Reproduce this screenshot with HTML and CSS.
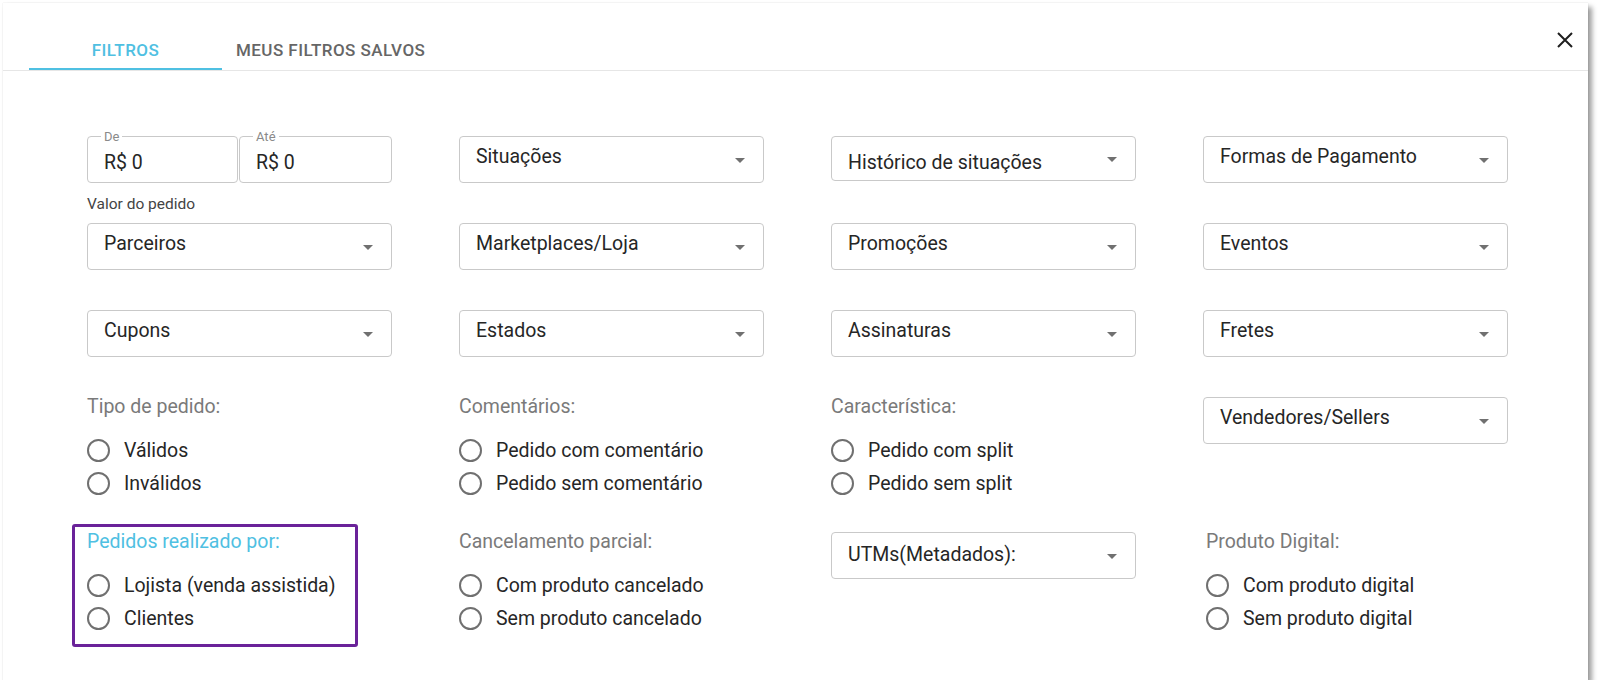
FILE: index.html
```html
<!DOCTYPE html>
<html lang="pt-BR">
<head>
  <meta charset="UTF-8" />
  <meta name="viewport" content="width=device-width, initial-scale=1.0"/>
  <title>Filtros de pedidos</title>
  <link rel="stylesheet" href="styles.css">
</head>
<body>
  <div class="dialog">
    <header class="dialog-header">
      <nav class="tabs">
        <button class="tab active">Filtros</button>
        <button class="tab">Meus filtros salvos</button>
      </nav>
      <button class="close" aria-label="Fechar">
        <svg width="16" height="16" viewBox="0 0 16 16">
          <path d="M1 1 L15 15 M15 1 L1 15" stroke="#1f1f1f" stroke-width="2" fill="none"/>
        </svg>
      </button>
    </header>

    <div class="filters">
      <!-- row 1 -->
      <div class="price-range">
        <div class="price-fields">
          <div class="outlined">
            <span class="outlined-label">De</span>
            <span class="outlined-value">R$ 0</span>
          </div>
          <div class="outlined">
            <span class="outlined-label">Até</span>
            <span class="outlined-value">R$ 0</span>
          </div>
        </div>
        <div class="helper">Valor do pedido</div>
      </div>
      <div class="select"><span class="select-text">Situações</span><span class="caret"></span></div>
      <div class="select select-low"><span class="select-text">Histórico de situações</span><span class="caret"></span></div>
      <div class="select"><span class="select-text">Formas de Pagamento</span><span class="caret"></span></div>

      <!-- row 2 -->
      <div class="select"><span class="select-text">Parceiros</span><span class="caret"></span></div>
      <div class="select"><span class="select-text">Marketplaces/Loja</span><span class="caret"></span></div>
      <div class="select"><span class="select-text">Promoções</span><span class="caret"></span></div>
      <div class="select"><span class="select-text">Eventos</span><span class="caret"></span></div>

      <!-- row 3 -->
      <div class="select"><span class="select-text">Cupons</span><span class="caret"></span></div>
      <div class="select"><span class="select-text">Estados</span><span class="caret"></span></div>
      <div class="select"><span class="select-text">Assinaturas</span><span class="caret"></span></div>
      <div class="select"><span class="select-text">Fretes</span><span class="caret"></span></div>

      <!-- row 4 -->
      <div class="radio-group">
        <div class="group-label">Tipo de pedido:</div>
        <label class="radio"><span class="circle"></span>Válidos</label>
        <label class="radio"><span class="circle"></span>Inválidos</label>
      </div>
      <div class="radio-group">
        <div class="group-label">Comentários:</div>
        <label class="radio"><span class="circle"></span>Pedido com comentário</label>
        <label class="radio"><span class="circle"></span>Pedido sem comentário</label>
      </div>
      <div class="radio-group">
        <div class="group-label">Característica:</div>
        <label class="radio"><span class="circle"></span>Pedido com split</label>
        <label class="radio"><span class="circle"></span>Pedido sem split</label>
      </div>
      <div class="cell-top">
        <div class="select"><span class="select-text">Vendedores/Sellers</span><span class="caret"></span></div>
      </div>

      <!-- row 5 -->
      <div class="radio-group highlighted">
        <div class="group-label accent">Pedidos realizado por:</div>
        <label class="radio"><span class="circle"></span>Lojista (venda assistida)</label>
        <label class="radio"><span class="circle"></span>Clientes</label>
      </div>
      <div class="radio-group">
        <div class="group-label">Cancelamento parcial:</div>
        <label class="radio"><span class="circle"></span>Com produto cancelado</label>
        <label class="radio"><span class="circle"></span>Sem produto cancelado</label>
      </div>
      <div class="cell-top">
        <div class="select"><span class="select-text select-mid">UTMs(Metadados):</span><span class="caret"></span></div>
      </div>
      <div class="radio-group shifted">
        <div class="group-label">Produto Digital:</div>
        <label class="radio"><span class="circle"></span>Com produto digital</label>
        <label class="radio"><span class="circle"></span>Sem produto digital</label>
      </div>
    </div>
  </div>
</body>
</html>
```

FILE: styles.css
```css
:root {
  --accent: #4fc0e2;
  --text: #262626;
  --muted: #7a7a7a;
  --border: #c9c9c9;
}

*, *::before, *::after {
  box-sizing: border-box;
}

body {
  margin: 0;
  background: #fff;
  font-family: Roboto, "Liberation Sans", Arial, sans-serif;
  color: var(--text);
}

.dialog {
  margin: 3px 0 0 3px;
  width: 1585px;
  height: 677px;
  background: #fff;
  box-shadow: 0 0 1px rgba(0, 0, 0, 0.18), 4px 4px 5px rgba(0, 0, 0, 0.38);
}

.dialog-header {
  display: flex;
  justify-content: space-between;
  align-items: flex-start;
  height: 68px;
  border-bottom: 1px solid #e6e6e6;
  padding: 0 15px 0 26px;
}

.tabs {
  display: flex;
}

.tab {
  min-width: 193px;
  height: 67px;
  padding: 29px 14px 0;
  border: none;
  border-bottom: 2px solid transparent;
  background: none;
  font-family: inherit;
  font-size: 17px;
  font-weight: 500;
  line-height: 20px;
  letter-spacing: 0.45px;
  text-transform: uppercase;
  color: #666;
  text-align: center;
  vertical-align: top;
  cursor: pointer;
}

.tab.active {
  color: var(--accent);
  border-bottom-color: var(--accent);
}

.close {
  margin-top: 29px;
  padding: 0;
  border: none;
  background: none;
  line-height: 0;
  cursor: pointer;
}

.filters {
  display: grid;
  grid-template-columns: repeat(4, 305px);
  grid-template-rows: 47px 47px 47px 95px auto;
  column-gap: 67px;
  row-gap: 40px;
  padding: 65px 0 0 84px;
}

/* price range */
.price-fields {
  display: grid;
  grid-template-columns: 151px 153px;
  gap: 1px;
}

.outlined {
  position: relative;
  height: 47px;
  border: 1px solid var(--border);
  border-radius: 4px;
  display: flex;
  align-items: center;
  padding-left: 16px;
}

.outlined-label {
  position: absolute;
  top: -7px;
  left: 13px;
  padding: 0 3px;
  background: #fff;
  font-size: 13px;
  line-height: 14px;
  color: #8a8a8a;
}

.outlined-value {
  margin-top: 5px;
  font-size: 19.5px;
}

.helper {
  margin-top: 12px;
  font-size: 15.5px;
  color: #444;
}

/* selects */
.select {
  height: 47px;
  border: 1px solid var(--border);
  border-radius: 4px;
  display: flex;
  align-items: center;
  justify-content: space-between;
  padding: 0 18px 0 16px;
}

.select-text {
  margin-bottom: 5px;
  font-size: 19.5px;
  line-height: 22px;
}

.select-low {
  height: 45px;
}

.select-low .select-text {
  margin: 9px 0 0;
}

.select-mid {
  margin-bottom: 2px;
}

.caret {
  width: 0;
  height: 0;
  margin-top: 1px;
  border-left: 5px solid transparent;
  border-right: 5px solid transparent;
  border-top: 5px solid #707070;
}

/* radio groups */
.radio-group {
  position: relative;
}

.group-label {
  height: 20px;
  margin-bottom: 17px;
  font-size: 19.5px;
  line-height: 20px;
  color: var(--muted);
}

.group-label.accent {
  color: var(--accent);
}

.radio {
  display: flex;
  align-items: center;
  height: 33px;
  font-size: 19.5px;
  cursor: pointer;
}

.circle {
  width: 23px;
  height: 23px;
  margin-right: 14px;
  border: 2px solid #707070;
  border-radius: 50%;
  flex: none;
}

.shifted {
  padding-left: 3px;
}

.highlighted::after {
  content: "";
  position: absolute;
  left: -15px;
  top: -8px;
  width: 286px;
  height: 123px;
  border: 3px solid #6a2299;
  border-radius: 3px;
  pointer-events: none;
}
```
